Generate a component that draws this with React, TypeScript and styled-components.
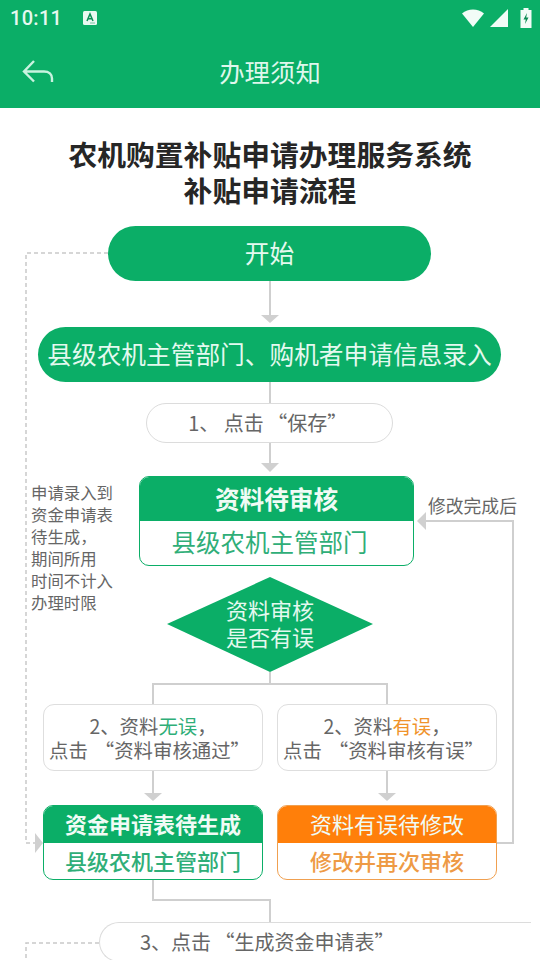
import React from "react";
import styled, { createGlobalStyle } from "styled-components";

const Global = createGlobalStyle`
  html, body { margin: 0; padding: 0; background: #fff; }
  body { width: 540px; height: 960px; overflow: hidden; font-family: "Noto Sans CJK SC", "Noto Sans", sans-serif; }
  * { box-sizing: border-box; }
`;

const Page = styled.div`
  width: 540px;
  height: 960px;
  display: flex;
  flex-direction: column;
  overflow: hidden;
  background: #fff;
`;
const Header = styled.header`
  height: 108px;
  background: #0bae67;
  display: flex;
  flex-direction: column;
  flex: none;
`;
const StatusBar = styled.div`
  height: 36px;
  display: flex;
  align-items: center;
  padding: 0 8px 0 10px;
  color: #e6f8ef;
`;
const Clock = styled.span`
  font-family: Roboto, sans-serif;
  font-size: 20px;
  font-weight: 500;
  letter-spacing: 0.3px;
`;
const StatusRight = styled.div`
  margin-left: auto;
  display: flex;
  align-items: center;
  gap: 6px;
`;
const AppBar = styled.div`
  flex: 1;
  position: relative;
  display: flex;
  align-items: center;
  justify-content: center;
`;
const BackIcon = styled.svg`
  position: absolute;
  left: 22px;
  top: 23px;
`;
const Title = styled.h1`
  margin: 0;
  font-size: 25.4px;
  font-weight: 400;
  color: #dff7ec;
  line-height: 34px;
  padding-bottom: 2px;
`;
const Doc = styled.main`
  flex: 1;
  display: flex;
  flex-direction: column;
  align-items: center;
  padding-top: 28px;
  min-height: 0;
`;
const DocTitle = styled.h2`
  margin: 0;
  font-size: 28.8px;
  line-height: 36px;
  font-weight: 700;
  color: #262626;
  text-align: center;
`;
const Canvas = styled.div`
  position: relative;
  width: 540px;
  flex: 1;
  margin-top: 18px;
  overflow: hidden;
`;
// canvas origin sits at page y = 226
const Lines = styled.svg`
  position: absolute;
  left: 0;
  top: 0;
`;
const Pill = styled.div<{ $x: number; $y: number; $w: number }>`
  position: absolute;
  left: ${(p) => p.$x}px;
  top: ${(p) => p.$y}px;
  width: ${(p) => p.$w}px;
  height: 55px;
  padding-bottom: 3px;
  border-radius: 28px;
  background: #0bae67;
  color: #e4f9ef;
  font-size: 24.7px;
  display: flex;
  align-items: center;
  justify-content: center;
  white-space: nowrap;
`;
const StepPill = styled.div<{ $x: number; $y: number; $w: number }>`
  --q: 3.5px;
  position: absolute;
  left: ${(p) => p.$x}px;
  top: ${(p) => p.$y}px;
  width: ${(p) => p.$w}px;
  height: 40px;
  padding-bottom: 2px;
  border: 1.5px solid #dcdcdc;
  border-radius: 20px;
  background: #fff;
  color: #666;
  font-size: 20px;
  display: flex;
  align-items: center;
  justify-content: center;
  white-space: nowrap;
`;
const OpenStepPill = styled(StepPill)`
  justify-content: flex-start;
  padding-left: 40px;
  border-right: none;
  border-radius: 20px 0 0 20px;
`;
const OpenQuote = styled.span`
  padding-left: var(--q);
`;
const CloseQuote = styled.span`
  padding-right: var(--q);
`;
const Note = styled.div<{ $x: number }>`
  --q: 7px;
  position: absolute;
  left: ${(p) => p.$x}px;
  top: 478px;
  width: 220px;
  height: 67px;
  border: 1.5px solid #dedede;
  border-radius: 11px;
  background: #fff;
  color: #666;
  font-size: 19.4px;
  line-height: 24px;
  display: flex;
  flex-direction: column;
  align-items: center;
  justify-content: center;
  white-space: nowrap;
`;
const Mark = styled.span<{ $c: string }>`
  color: ${(p) => p.$c};
`;
const Card = styled.div<{ $x: number; $y: number; $w: number; $h: number; $c: string }>`
  position: absolute;
  left: ${(p) => p.$x}px;
  top: ${(p) => p.$y}px;
  width: ${(p) => p.$w}px;
  height: ${(p) => p.$h}px;
  border: 1.5px solid ${(p) => p.$c};
  border-radius: 10px;
  background: #fff;
  overflow: hidden;
  display: flex;
  flex-direction: column;
`;
const CardHead = styled.div<{ $h: number; $c: string; $fs: number; $bold?: boolean }>`
  flex: none;
  height: ${(p) => p.$h}px;
  padding-bottom: 3px;
  background: ${(p) => p.$c};
  color: #f0fbf5;
  font-size: ${(p) => p.$fs}px;
  font-weight: ${(p) => (p.$bold ? 700 : 400)};
  display: flex;
  align-items: center;
  justify-content: center;
  white-space: nowrap;
`;
const CardBody = styled.div<{ $c: string; $fs: number; $shift?: number; $weight?: number }>`
  flex: 1;
  padding: 0 ${(p) => p.$shift ?? 0}px 3px 0;
  color: ${(p) => p.$c};
  font-size: ${(p) => p.$fs}px;
  font-weight: ${(p) => p.$weight ?? 400};
  display: flex;
  align-items: center;
  justify-content: center;
  white-space: nowrap;
`;
const DiamondText = styled.div`
  position: absolute;
  left: 167px;
  top: 370px;
  width: 206px;
  text-align: center;
  color: #e4f9ef;
  font-size: 22px;
  line-height: 27px;
`;
const SideText = styled.div`
  position: absolute;
  left: 31px;
  top: 255px;
  color: #666;
  font-size: 16.4px;
  line-height: 22px;
  white-space: nowrap;
`;
const FixedLabel = styled.div`
  position: absolute;
  left: 428px;
  top: 266px;
  color: #666;
  font-size: 17.8px;
  line-height: 26px;
  white-space: nowrap;
`;

const GREEN = "#0bae67";
const ORANGE = "#ff7f0a";
const LINE = "#cfcfcf";

const Flow = () => (
  <Canvas>
    <Lines width="540" height="734" viewBox="0 0 540 734">
      <g fill="none" stroke={LINE} strokeWidth="2">
        <path d="M270 55V92M270 156V180M270 217V240M270 446V458H153V480M270 458H387V480" />
        <path d="M153 545V570M387 545V570M153 654V674H270V700" />
        <path d="M497 617H513V295H426" />
      </g>
      <g fill="none" stroke="#c9c9c9" strokeWidth="1.5" strokeDasharray="4 3">
        <path d="M108 27H26V617H36" />
        <path d="M99 717H26V734" />
      </g>
      <g fill="#d0d0d0">
        <path d="M261 89H279L270 97Z" />
        <path d="M261 237H279L270 246Z" />
        <path d="M144 567H162L153 575Z" />
        <path d="M378 567H396L387 575Z" />
        <path d="M426 286V304L417 295Z" />
        <path d="M35 607V627L43 617Z" />
      </g>
      <path d="M167 398L270 351L373 398L270 446Z" fill={GREEN} />
      <g fill="#9a9a9a" opacity="0.55">
        <rect x="433" y="710" width="12" height="1.5" />
        <rect x="439" y="717" width="3" height="4" />
        <rect x="487" y="709" width="3" height="1.5" />
        <rect x="431" y="729" width="3" height="2" />
      </g>
    </Lines>

    <Pill $x={108} $y={0} $w={323}>开始</Pill>
    <Pill $x={38} $y={101} $w={463}>县级农机主管部门、购机者申请信息录入</Pill>
    <StepPill $x={146} $y={177} $w={247}>
      <span>1、 点击<OpenQuote>“</OpenQuote>保存<CloseQuote>”</CloseQuote></span>
    </StepPill>

    <SideText>
      申请录入到<br />资金申请表<br />待生成，<br />期间所用<br />时间不计入<br />办理时限
    </SideText>

    <Card $x={139} $y={250} $w={275} $h={90} $c={GREEN}>
      <CardHead $h={44} $c={GREEN} $fs={24.6} $bold>资料待审核</CardHead>
      <CardBody $c="#2fae78" $fs={24.5} $shift={14}>县级农机主管部门</CardBody>
    </Card>
    <FixedLabel>修改完成后</FixedLabel>

    <DiamondText>资料审核<br />是否有误</DiamondText>

    <Note $x={43}>
      <span>2、资料<Mark $c="#2fae78">无误</Mark>，</span>
      <span>点击<OpenQuote>“</OpenQuote>资料审核通过<CloseQuote>”</CloseQuote></span>
    </Note>
    <Note $x={277}>
      <span>2、资料<Mark $c="#f0932b">有误</Mark>，</span>
      <span>点击<OpenQuote>“</OpenQuote>资料审核有误<CloseQuote>”</CloseQuote></span>
    </Note>

    <Card $x={43} $y={579} $w={220} $h={75} $c={GREEN}>
      <CardHead $h={37} $c={GREEN} $fs={22} $bold>资金申请表待生成</CardHead>
      <CardBody $c="#2fae78" $fs={22} $weight={500}>县级农机主管部门</CardBody>
    </Card>
    <Card $x={277} $y={579} $w={220} $h={75} $c="#f0a050">
      <CardHead $h={37} $c={ORANGE} $fs={22}>资料有误待修改</CardHead>
      <CardBody $c="#ee9a45" $fs={22} $weight={500}>修改并再次审核</CardBody>
    </Card>

    <OpenStepPill $x={99} $y={696} $w={432}>
      <span>3、点击<OpenQuote>“</OpenQuote>生成资金申请表<CloseQuote>”</CloseQuote></span>
    </OpenStepPill>
  </Canvas>
);

export default function App() {
  return (
    <Page>
      <Global />
      <Header>
        <StatusBar>
          <Clock>10:11</Clock>
          <svg width="16" height="16" viewBox="0 0 16 16" style={{ marginLeft: 20 }}>
            <rect x="1" y="1" width="14" height="14" rx="1.5" fill="#e9f9f1" />
            <path d="M5 11L8 4L11 11M6.2 8.8H9.8" fill="none" stroke="#0b8f56" strokeWidth="1.5" />
            <path d="M8.5 13H13" stroke="#0b8f56" strokeWidth="1" strokeDasharray="1 1" />
          </svg>
          <StatusRight>
            <svg width="22" height="18" viewBox="0 0 22 18">
              <path d="M0 4.5C6 -0.7 16 -0.7 22 4.5L11 18Z" fill="#f2fcf7" />
            </svg>
            <svg width="18" height="18" viewBox="0 0 18 18">
              <path d="M18 0V18H0Z" fill="#f2fcf7" />
            </svg>
            <svg width="12" height="20" viewBox="0 0 12 20" style={{ marginLeft: 6 }}>
              <path d="M3.5 0H8.5V2H11.5V20H0.5V2H3.5Z" fill="#f2fcf7" />
              <path d="M7 5L3.5 11.5H5.8L5 16L8.5 9.5H6.2Z" fill="#0a8a52" />
            </svg>
          </StatusRight>
        </StatusBar>
        <AppBar>
          <BackIcon width="32" height="26" viewBox="0 0 32 26">
            <path d="M12 2L2 12.5L12 22.5M2 12.5H22C27 12.5 30 15.5 30 19.5V23" fill="none" stroke="#c9f3e0" strokeWidth="2.4" />
          </BackIcon>
          <Title>办理须知</Title>
        </AppBar>
      </Header>
      <Doc>
        <DocTitle>
          农机购置补贴申请办理服务系统
          <br />
          补贴申请流程
        </DocTitle>
        <Flow />
      </Doc>
    </Page>
  );
}
